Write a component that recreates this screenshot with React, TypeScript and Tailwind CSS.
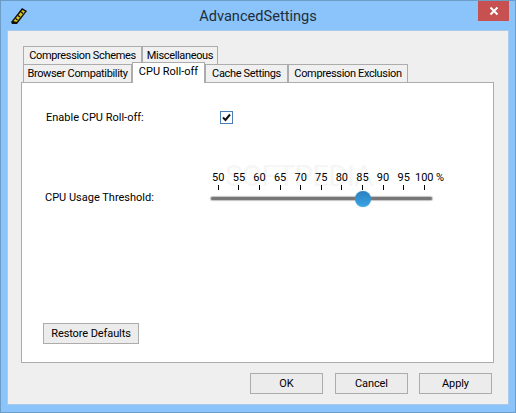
const ticks = [50, 55, 60, 65, 70, 75, 80, 85, 90, 95, 100];

function TabButton({ label, width, active }: { label: string; width: string; active?: boolean }) {
  if (active) {
    return (
      <div className={`${width} relative z-10 -mt-[2px] h-[21px] border border-b-0 border-[#acacac] bg-white text-center leading-[18px] whitespace-nowrap text-black`}>
        {label}
      </div>
    );
  }
  return (
    <div className={`${width} h-[18px] border border-b-0 border-[#acacac] bg-[#f0f0f0] text-center leading-[18px] tracking-[-0.35px] whitespace-nowrap text-black`}>
      {label}
    </div>
  );
}

function PushButton({ label, width }: { label: string; width: string }) {
  return (
    <div className={`${width} h-[21px] border border-[#acacac] bg-[#ececec] text-center leading-[19px] tracking-[-0.1px] whitespace-nowrap text-black`}>
      {label}
    </div>
  );
}

function RulerIcon() {
  return (
    <svg width="18" height="18" viewBox="0 0 18 18">
      <path d="M1 15 L12 1 L17 4 L7 17 L2 17 Z" fill="#111" />
      <path d="M3.5 14 L12.5 3 L15 4.5 L6.5 15 Z" fill="#e0c818" />
      <path d="M5.5 11.5 L7.5 13 M8 8.5 L10 10 M11 5 L13 6.5" stroke="#111" strokeWidth="1.4" />
    </svg>
  );
}

function Slider() {
  return (
    <div className="relative w-[221px]">
      <div className="-ml-[3px] flex w-[228px]">
        {ticks.map((t) => (
          <div key={t} className="flex w-[20.6px] shrink-0 flex-col items-center">
            <span className="h-[15px] leading-[15px] whitespace-nowrap text-black">{t}</span>
            <span className="h-[5px] w-px bg-black" />
          </div>
        ))}
      </div>
      <div className="mt-[7px] h-[3px] rounded-full bg-[#777777] shadow-[0_0_1px_1px_#c4c4c4]" />
      <span className="absolute left-[225px] top-0 leading-[15px] text-black">%</span>
      <div className="absolute left-[144px] top-[21px] h-[16px] w-[16px] rounded-full bg-gradient-to-b from-[#2a7fbf] to-[#3aa5e6] shadow-[0_0_1px_#8aa8bd]" />
    </div>
  );
}

export default function App() {
  return (
    <div className="flex h-[413px] w-[516px] flex-col overflow-hidden border border-[#6d9cc6] bg-[#8bc4fa] font-['Roboto',sans-serif] text-[11px] leading-[18px]">
      <div className="relative flex h-[29px] shrink-0 items-center justify-center">
        <div className="absolute left-[9px] top-[6px]">
          <RulerIcon />
        </div>
        <span className="mt-[1px] text-[14.6px] text-[#1f2d3a]">AdvancedSettings</span>
        <div className="absolute right-[6px] top-0 flex h-[20px] w-[31px] items-center justify-center bg-[#c75050]">
          <svg width="10" height="10" viewBox="0 0 10 10">
            <path d="M1.5 1.5 L8.5 8.5 M8.5 1.5 L1.5 8.5" stroke="#fff" strokeWidth="2" />
          </svg>
        </div>
      </div>
      <div className="mx-[6px] flex h-[375px] flex-col border border-[#a9cbe9] bg-[#efefef] px-[13px] pt-[15px]">
        <div className="flex h-[18px] pl-[2px]">
          <TabButton label="Compression Schemes" width="w-[119px]" />
          <TabButton label="Miscellaneous" width="w-[76px]" />
        </div>
        <div className="flex h-[18px] pl-[2px]">
          <TabButton label="Browser Compatibility" width="w-[109px]" />
          <TabButton label="CPU Roll-off" width="w-[73px]" active />
          <TabButton label="Cache Settings" width="w-[83px]" />
          <TabButton label="Compression Exclusion" width="w-[120px]" />
        </div>
        <div className="relative flex h-[281px] w-[473px] shrink-0 flex-col border border-[#acacac] bg-white pl-[21px]">
          <span className="pointer-events-none absolute left-[203px] top-[78px] text-[30px] leading-[30px] tracking-[-1px] text-[#f6f6f6]">SOFTPEDIA</span>
          <div className="relative mt-[25px] flex items-center">
            <span className="w-[177px] pl-[3px] leading-[20px] text-black">Enable CPU Roll-off:</span>
            <span className="mb-[2px] flex h-[13px] w-[13px] items-center justify-center border border-[#4a7fb5] bg-white">
              <svg width="11" height="11" viewBox="0 0 11 11">
                <path d="M2 5.5 L4.5 8 L9 2.5" fill="none" stroke="#111" strokeWidth="2" />
              </svg>
            </span>
          </div>
          <div className="relative mt-[42px] flex items-start">
            <span className="mt-[19px] w-[168px] pl-[2px] text-black">CPU Usage Threshold:</span>
            <Slider />
          </div>
          <div className="relative mt-auto mb-[18px]">
            <PushButton label="Restore Defaults" width="w-[96px]" />
          </div>
        </div>
        <div className="mt-[10px] flex justify-end gap-[11px] pr-[3px]">
          <PushButton label="OK" width="mr-[1px] w-[73px]" />
          <PushButton label="Cancel" width="w-[73px]" />
          <PushButton label="Apply" width="w-[73px]" />
        </div>
      </div>
    </div>
  );
}
